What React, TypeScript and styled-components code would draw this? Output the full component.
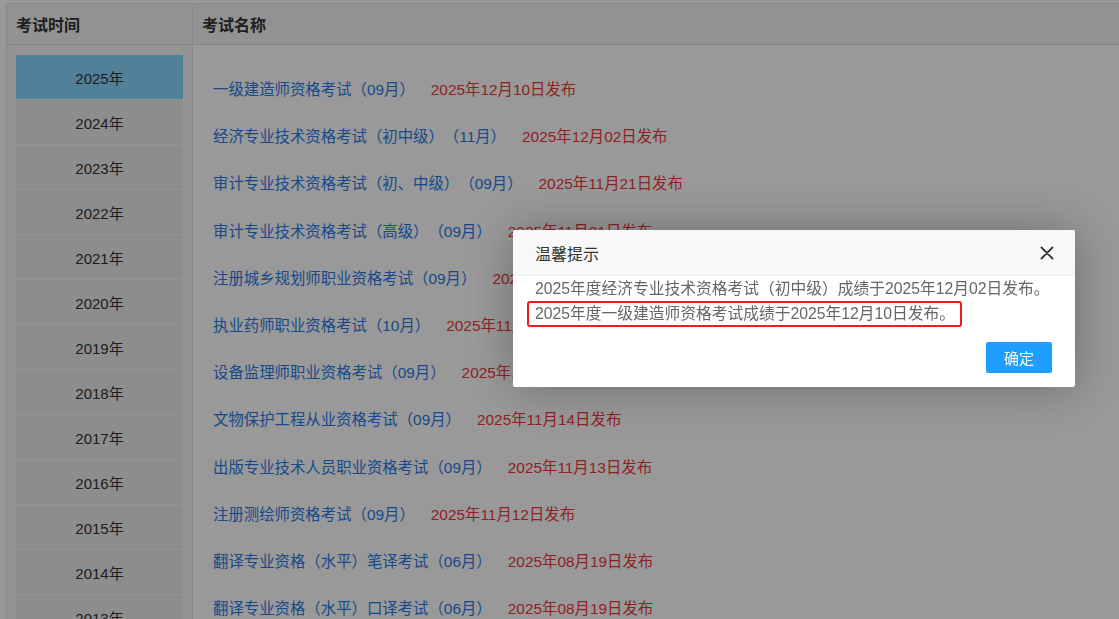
import React from "react";
import styled, { createGlobalStyle } from "styled-components";

const GlobalStyle = createGlobalStyle`
  html, body {
    margin: 0;
    padding: 0;
    background: #fff;
    overflow: hidden;
    font-family: "Liberation Sans", "Noto Sans CJK SC", sans-serif;
    text-spacing-trim: space-all;
  }
`;

const years = [
  2025, 2024, 2023, 2022, 2021, 2020, 2019, 2018, 2017, 2016, 2015, 2014, 2013, 2012,
];

const exams = [
  { name: "一级建造师资格考试（09月）", date: "2025年12月10日发布" },
  { name: "经济专业技术资格考试（初中级）（11月）", date: "2025年12月02日发布" },
  { name: "审计专业技术资格考试（初、中级）（09月）", date: "2025年11月21日发布" },
  { name: "审计专业技术资格考试（高级）（09月）", date: "2025年11月21日发布" },
  { name: "注册城乡规划师职业资格考试（09月）", date: "2025年11月19日发布" },
  { name: "执业药师职业资格考试（10月）", date: "2025年11月18日发布" },
  { name: "设备监理师职业资格考试（09月）", date: "2025年11月17日发布" },
  { name: "文物保护工程从业资格考试（09月）", date: "2025年11月14日发布" },
  { name: "出版专业技术人员职业资格考试（09月）", date: "2025年11月13日发布" },
  { name: "注册测绘师资格考试（09月）", date: "2025年11月12日发布" },
  { name: "翻译专业资格（水平）笔译考试（06月）", date: "2025年08月19日发布" },
  { name: "翻译专业资格（水平）口译考试（06月）", date: "2025年08月19日发布" },
  { name: "房地产估价师职业资格考试（05月）", date: "2025年08月15日发布" },
];

const Page = styled.div`
  padding: 3px 0 0 6px;
  height: 619px;
  box-sizing: border-box;
  overflow: hidden;
`;

const Table = styled.div`
  width: 1200px;
  display: grid;
  grid-template-columns: 186px 1fr;
  grid-template-rows: 41px auto;
  border-top: 1px solid #e2e2e2;
  border-left: 1px solid #e2e2e2;
  box-sizing: border-box;
`;

const HeadCell = styled.div`
  background: #f3f3f3;
  border-bottom: 1px solid #dedede;
  border-right: 1px solid #e6e6e6;
  display: flex;
  align-items: center;
  padding-left: 9px;
  font-size: 16px;
  font-weight: bold;
  color: #333;
`;

const YearColumn = styled.div`
  background: #f7f7f7;
  border-right: 1px solid #e6e6e6;
  padding: 10px 9px 0 9px;
  display: flex;
  flex-direction: column;
  gap: 1px;
`;

const YearItem = styled.div<{ $active?: boolean }>`
  height: 44px;
  flex-shrink: 0;
  display: flex;
  align-items: center;
  justify-content: center;
  font-size: 15px;
  color: #333;
  background: ${(p) => (p.$active ? "#8ad5ff" : "#ececec")};
`;

const ExamList = styled.ul`
  list-style: none;
  margin: 0;
  padding: 21px 0 0 20px;
`;

const ExamRow = styled.li`
  height: 47.2px;
  line-height: 47px;
  font-size: 15.4px;
  white-space: nowrap;
`;

const ExamName = styled.a`
  color: #2a7be6;
  text-decoration: none;
`;

const ExamDate = styled.span`
  color: #f03838;
  margin-left: 16px;
`;

const Shade = styled.div`
  position: fixed;
  inset: 0;
  background: rgba(0, 0, 0, 0.4);
`;

const Dialog = styled.div`
  position: fixed;
  left: 513px;
  top: 230px;
  width: 562px;
  background: #fff;
  border-radius: 2px;
  box-shadow: 1px 1px 50px rgba(0, 0, 0, 0.3);
`;

const DialogHead = styled.div`
  height: 46px;
  box-sizing: border-box;
  background: #f8f8f8;
  border-bottom: 1px solid #eee;
  border-radius: 2px 2px 0 0;
  display: flex;
  align-items: center;
  justify-content: space-between;
  padding: 0 20px 0 22px;
  font-size: 16px;
  color: #333;
`;

const CloseButton = styled.button`
  border: none;
  background: none;
  padding: 0;
  width: 16px;
  height: 16px;
  display: flex;
  align-items: center;
  justify-content: center;
  cursor: pointer;
`;

const DialogBody = styled.div`
  padding: 0 22px;
  font-size: 15.75px;
  line-height: 25px;
  color: #666;
  white-space: nowrap;
`;

const Highlight = styled.span`
  display: inline-block;
  margin-left: -8px;
  padding: 0 5px 0 6px;
  line-height: 22px;
  border: 2px solid #ee1c1c;
  border-radius: 3px;
`;

const DialogFoot = styled.div`
  display: flex;
  justify-content: flex-end;
  padding: 15px 23px 14px;
`;

const ConfirmButton = styled.button`
  width: 66px;
  height: 31px;
  border: none;
  border-radius: 2px;
  background: #1e9fff;
  color: #fff;
  font-size: 15px;
  font-family: inherit;
  cursor: pointer;
`;

const App: React.FC = () => {
  return (
    <>
      <GlobalStyle />
      <Page>
        <Table>
          <HeadCell>考试时间</HeadCell>
          <HeadCell>考试名称</HeadCell>
          <YearColumn>
            {years.map((y, i) => (
              <YearItem key={y} $active={i === 0}>
                {y}年
              </YearItem>
            ))}
          </YearColumn>
          <ExamList>
            {exams.map((e) => (
              <ExamRow key={e.name}>
                <ExamName href="#">{e.name}</ExamName>
                <ExamDate>{e.date}</ExamDate>
              </ExamRow>
            ))}
          </ExamList>
        </Table>
      </Page>
      <Shade />
      <Dialog>
        <DialogHead>
          <span>温馨提示</span>
          <CloseButton aria-label="关闭">
            <svg width="14" height="14" viewBox="0 0 14 14">
              <path d="M1.5 1.5 L12.5 12.5 M12.5 1.5 L1.5 12.5" stroke="#333" strokeWidth="1.8" strokeLinecap="round" />
            </svg>
          </CloseButton>
        </DialogHead>
        <DialogBody>
          <div>2025年度经济专业技术资格考试（初中级）成绩于2025年12月02日发布。</div>
          <Highlight>2025年度一级建造师资格考试成绩于2025年12月10日发布。</Highlight>
        </DialogBody>
        <DialogFoot>
          <ConfirmButton>确定</ConfirmButton>
        </DialogFoot>
      </Dialog>
    </>
  );
};

export default App;
